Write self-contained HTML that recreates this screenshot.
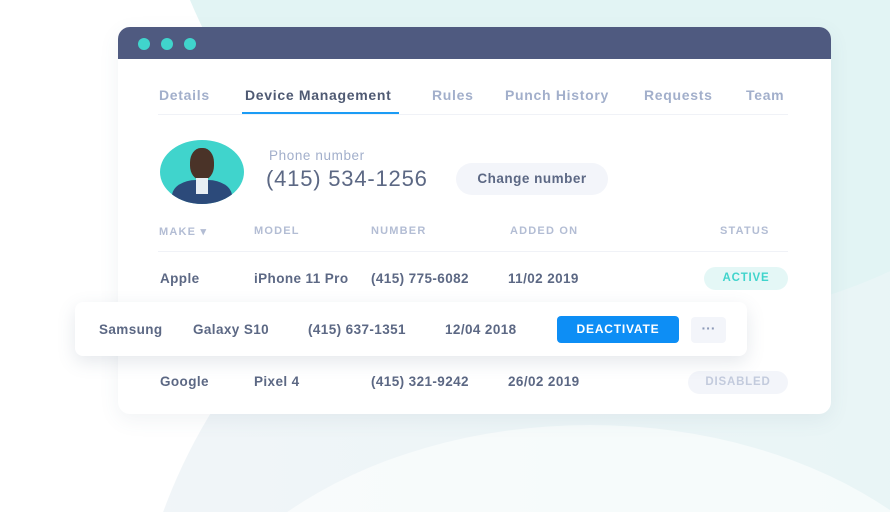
<!DOCTYPE html>
<html><head><style>
*{margin:0;padding:0;box-sizing:border-box}
html,body{width:890px;height:512px;overflow:hidden}
body{background:#fff;font-family:"Liberation Sans",sans-serif;position:relative}
.bg1{position:absolute;left:150px;top:-720px;width:1040px;height:1040px;border-radius:50%;background:#e2f4f4}
.bg2{position:absolute;left:130px;top:150px;width:1100px;height:1100px;border-radius:50%;background:linear-gradient(90deg,#f1f5f8,#e5f5f5)}
.bg3{position:absolute;left:160px;top:425px;width:860px;height:600px;border-radius:50%;background:rgba(255,255,255,.55)}
.win{position:absolute;left:118px;top:27px;width:713px;height:387px;background:#fff;border-radius:12px;overflow:hidden;box-shadow:0 6px 20px rgba(80,100,130,.08)}
.bar{height:32px;background:#4f5a80;position:relative}
.dot{position:absolute;top:11px;width:12px;height:12px;border-radius:50%;background:#40d4cc}
.t{position:absolute;font-weight:bold;font-size:14px;color:#a2afcb;letter-spacing:.7px}
.d{position:absolute;font-weight:bold;font-size:13.5px;color:#5c6884;letter-spacing:.4px}
.h{position:absolute;font-weight:bold;font-size:11px;color:#b3bdd4;letter-spacing:1.2px}
.pill{position:absolute;border-radius:12px;font-weight:bold;font-size:11.5px;text-align:center;letter-spacing:.8px}
</style></head><body>
<div class="bg2"></div><div class="bg1"></div><div class="bg3"></div>
<div class="win">
<div class="bar"><div class="dot" style="left:20px"></div><div class="dot" style="left:43px"></div><div class="dot" style="left:66px"></div></div>
<div class="t" style="left:41px;top:60px">Details</div>
<div class="t" style="left:127px;top:60px;color:#4f5a73">Device Management</div>
<div style="position:absolute;left:124px;top:85px;width:157px;height:2px;background:#1b9cf5"></div>
<div style="position:absolute;left:40px;top:87px;width:630px;height:1px;background:#f0f2f7"></div>
<div class="t" style="left:314px;top:60px">Rules</div>
<div class="t" style="left:387px;top:60px">Punch History</div>
<div class="t" style="left:526px;top:60px">Requests</div>
<div class="t" style="left:628px;top:60px">Team</div>
<div style="position:absolute;left:42px;top:113px;width:84px;height:64px;border-radius:50%;background:#40d4cc;overflow:hidden">
<div style="position:absolute;left:30px;top:8px;width:24px;height:32px;border-radius:45%;background:#4a3328"></div>
<div style="position:absolute;left:12px;top:40px;width:60px;height:40px;border-radius:40% 40% 0 0;background:#2c4a7a"></div>
<div style="position:absolute;left:36px;top:38px;width:12px;height:16px;background:#e8eef4"></div>
</div>
<div style="position:absolute;left:151px;top:121px;font-size:13.5px;color:#a2afcb;letter-spacing:.6px">Phone number</div>
<div style="position:absolute;left:148px;top:139px;font-size:22px;color:#5c6884;letter-spacing:.8px">(415) 534-1256</div>
<div style="position:absolute;left:338px;top:136px;width:152px;height:32px;border-radius:16px;background:#f3f5fa;font-weight:bold;font-size:13.5px;color:#5c6884;text-align:center;line-height:32px;letter-spacing:.5px">Change number</div>
<div class="h" style="left:41px;top:198px">MAKE &#9662;</div>
<div class="h" style="left:136px;top:198px">MODEL</div>
<div class="h" style="left:253px;top:198px">NUMBER</div>
<div class="h" style="left:392px;top:198px">ADDED ON</div>
<div class="h" style="left:602px;top:198px">STATUS</div>
<div style="position:absolute;left:40px;top:224px;width:630px;height:1px;background:#f0f2f7"></div>
<div class="d" style="left:42px;top:244px">Apple</div>
<div class="d" style="left:136px;top:244px">iPhone 11 Pro</div>
<div class="d" style="left:253px;top:244px">(415) 775-6082</div>
<div class="d" style="left:390px;top:244px">11/02 2019</div>
<div class="pill" style="left:586px;top:240px;width:84px;height:23px;line-height:23px;background:#e4f7f6;color:#40d4cc">ACTIVE</div>
<div class="d" style="left:42px;top:347px">Google</div>
<div class="d" style="left:136px;top:347px">Pixel 4</div>
<div class="d" style="left:253px;top:347px">(415) 321-9242</div>
<div class="d" style="left:390px;top:347px">26/02 2019</div>
<div class="pill" style="left:570px;top:344px;width:100px;height:23px;line-height:23px;background:#f3f5fa;color:#c3cbdd">DISABLED</div>
</div>
<div style="position:absolute;left:75px;top:302px;width:672px;height:54px;background:#fff;border-radius:8px;box-shadow:0 6px 18px rgba(80,100,130,.15)">
<div class="d" style="left:24px;top:20px">Samsung</div>
<div class="d" style="left:118px;top:20px">Galaxy S10</div>
<div class="d" style="left:233px;top:20px">(415) 637-1351</div>
<div class="d" style="left:370px;top:20px">12/04 2018</div>
<div style="position:absolute;left:482px;top:14px;width:122px;height:27px;border-radius:4px;background:#0d8ef5;color:#fff;font-weight:bold;font-size:12px;text-align:center;line-height:27px;letter-spacing:.8px">DEACTIVATE</div>
<div style="position:absolute;left:616px;top:15px;width:35px;height:26px;border-radius:4px;background:#f3f5fa;color:#8d9ab8;text-align:center;line-height:22px;font-size:14px;font-weight:bold">&middot;&middot;&middot;</div>
</div>
</body></html>
